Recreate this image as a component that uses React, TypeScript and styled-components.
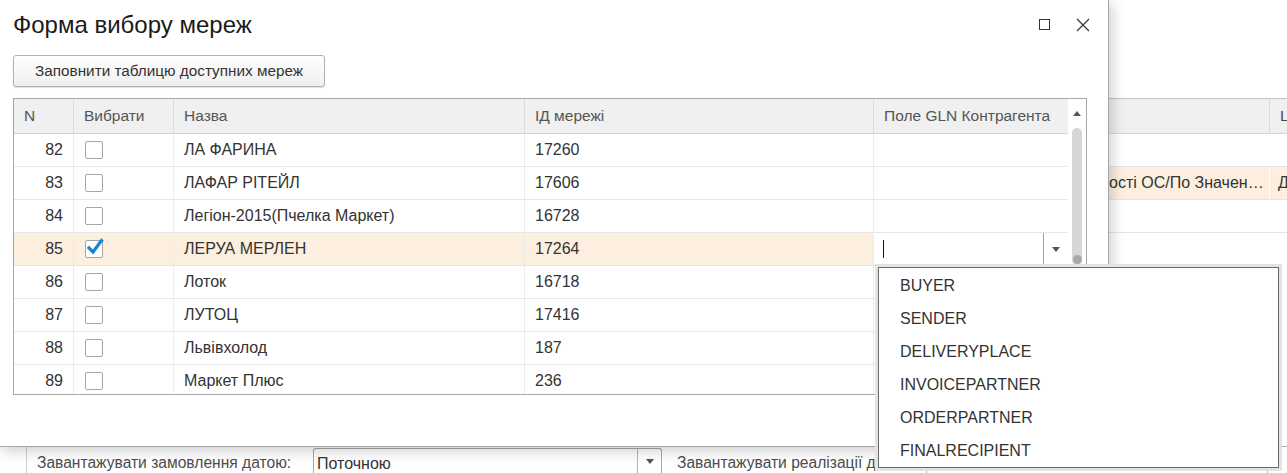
import React from 'react';
import styled, { createGlobalStyle } from 'styled-components';

const Global = createGlobalStyle`
  html, body { margin: 0; padding: 0; }
  body { font-family: "Liberation Sans", Arial, sans-serif; background: #fff; color: #333; }
  * { box-sizing: border-box; }
`;

const Screen = styled.div`
  position: relative;
  width: 1287px;
  height: 473px;
  overflow: hidden;
  background: #fff;
`;

/* ---------- background application ---------- */
const BgPage = styled.div`
  height: 100%;
  display: flex;
  flex-direction: column;
  padding-top: 98px;
`;

const BgHeader = styled.div`
  display: grid;
  grid-template-columns: 1269px 1fr;
  height: 36px;
  background: #f0f0f0;
  border-top: 1px solid #c4c4c4;
  border-bottom: 1px solid #d6d6d6;
`;

const BgHeadCell = styled.div`
  display: flex;
  align-items: center;
  padding-left: 10px;
  font-size: 15.5px;
  color: #4d4d4d;
  white-space: nowrap;
  overflow: hidden;
  & + & { border-left: 1px solid #dcdcdc; }
`;

const BgRow = styled.div<{ $hl?: boolean }>`
  display: grid;
  grid-template-columns: 1100px 169px 1fr;
  height: 33px;
  border-bottom: 1px solid #e4e4e4;
  background: ${(p) => (p.$hl ? '#fdefdf' : '#fff')};
`;

const BgCell = styled.div`
  display: flex;
  align-items: center;
  padding: 0 5px 0 8px;
  font-size: 16px;
  color: #333;
  white-space: nowrap;
  overflow: hidden;
  & + & { border-left: 1px solid #fff; }
`;

const BgText = styled.span`
  overflow: hidden;
  text-overflow: ellipsis;
  white-space: nowrap;
  max-width: 100%;
`;

const BottomBar = styled.div`
  margin-top: auto;
  height: 27px;
  border-top: 1px solid #b4b4b4;
  display: flex;
  padding-left: 26px;
`;

const FieldGroup = styled.div`
  display: flex;
  align-items: flex-start;
  border-left: 1px solid #cfcfcf;
  padding-left: 10px;
`;

const FieldLabel = styled.div<{ $w: number; $pad?: number }>`
  width: ${(p) => p.$w}px;
  padding-top: 7px;
  padding-left: ${(p) => p.$pad ?? 0}px;
  font-size: 15.6px;
  color: #4d4d4d;
  white-space: nowrap;
  overflow: hidden;
`;

const FieldInput = styled.div<{ $w: number }>`
  width: ${(p) => p.$w}px;
  height: 27px;
  margin-top: 1px;
  border: 1px solid #a8a8a8;
  border-bottom: none;
  border-radius: 3px 3px 0 0;
  display: flex;
`;

const FieldValue = styled.div`
  flex: 1;
  padding: 6px 0 0 3px;
  font-size: 16px;
  color: #333;
`;

const FieldBtn = styled.div`
  width: 24px;
  border-left: 1px solid #b4b4b4;
  display: flex;
  justify-content: center;
  padding-top: 10px;
`;

/* ---------- modal window ---------- */
const Modal = styled.div`
  position: absolute;
  left: 0;
  top: 0;
  width: 1109px;
  height: 447px;
  background: #fff;
  border-right: 1px solid #a6a6a6;
  border-bottom: 1px solid #a6a6a6;
  box-shadow: 2px 3px 14px rgba(0, 0, 0, 0.22);
  display: flex;
  flex-direction: column;
`;

const TitleBar = styled.div`
  height: 50px;
  display: flex;
  align-items: center;
  padding: 0 18px 0 13px;
`;

const Title = styled.div`
  flex: 1;
  font-size: 24px;
  color: #1a1a1a;
  padding-bottom: 1px;
`;

const WinBtns = styled.div`
  display: flex;
  align-items: center;
  gap: 25px;
`;

const Toolbar = styled.div`
  padding: 5px 0 11px 13px;
`;

const Button = styled.div`
  width: 312px;
  height: 32px;
  border: 1px solid #b0b0b0;
  border-radius: 3px;
  background: linear-gradient(#ffffff, #efefef);
  box-shadow: 0 1px 1px rgba(0, 0, 0, 0.12);
  display: flex;
  align-items: center;
  justify-content: center;
  font-size: 15.3px;
  color: #333;
`;

const TableFrame = styled.div`
  margin-left: 13px;
  width: 1074px;
  height: 297px;
  border: 1px solid #a8a8a8;
  display: flex;
`;

const DataArea = styled.div`
  flex: 1;
  display: flex;
  flex-direction: column;
  overflow: hidden;
`;

const cols = '60px 100px 351px 349px 1fr';

const HeadRow = styled.div`
  display: grid;
  grid-template-columns: ${cols};
  height: 35px;
  background: #f0f0f0;
  border-bottom: 1px solid #d4d4d4;
`;

const HeadCell = styled.div`
  display: flex;
  align-items: center;
  padding-left: 10px;
  font-size: 15.5px;
  color: #555;
  border-right: 1px solid #dcdcdc;
  white-space: nowrap;
  &:last-child { border-right: none; }
`;

const Body = styled.div`
  height: 260px;
  overflow: hidden;
`;

const Row = styled.div<{ $active?: boolean }>`
  display: grid;
  grid-template-columns: ${cols};
  height: 33px;
  border-bottom: 1px solid #e6e6e6;
  background: ${(p) => (p.$active ? '#fdefdf' : '#fff')};
`;

const Cell = styled.div<{ $right?: boolean }>`
  display: flex;
  align-items: center;
  justify-content: ${(p) => (p.$right ? 'flex-end' : 'flex-start')};
  padding: ${(p) => (p.$right ? '0 10px 0 0' : '0 0 0 10px')};
  font-size: 16px;
  color: #333;
  white-space: nowrap;
  border-right: 1px solid #ececec;
  &:last-child { border-right: none; }
`;

const CheckCell = styled(Cell)`
  padding-left: 11px;
`;

const Checkbox = styled.div`
  width: 18px;
  height: 18px;
  border: 1px solid #a6a6a6;
  border-radius: 2px;
  background: #fff;
  position: relative;
`;

const CheckMark = styled.svg`
  position: absolute;
  left: 0px;
  top: -3px;
`;

const EditCell = styled.div`
  background: #fff;
  display: flex;
  align-items: stretch;
`;

const EditArea = styled.div`
  flex: 1;
  display: flex;
  align-items: center;
  padding-left: 9px;
`;

const Caret = styled.div`
  width: 1px;
  height: 18px;
  background: #111;
`;

const EditBtn = styled.div`
  width: 25px;
  border-left: 1px solid #a0a0a0;
  display: flex;
  align-items: center;
  justify-content: center;
`;

const ScrollBar = styled.div`
  width: 18px;
  display: flex;
  flex-direction: column;
  align-items: center;
  padding-top: 12px;
`;

const Thumb = styled.div`
  margin-top: 12px;
  width: 10px;
  height: 137px;
  border-radius: 5px;
  background: #d6d6d6;
  display: flex;
  flex-direction: column;
  justify-content: flex-end;
  align-items: center;
  padding-bottom: 1px;
`;

const ThumbDot = styled.div`
  width: 9px;
  height: 9px;
  border-radius: 50%;
  background: #a9a9a9;
`;

/* ---------- dropdown list ---------- */
const Dropdown = styled.div`
  position: absolute;
  left: 878px;
  top: 267px;
  width: 401px;
  height: 201px;
  background: #fff;
  border: 1px solid #6a6a6a;
  box-shadow: 0 0 0 3px #e3e3e3;
  padding-top: 1px;
`;

const DropItem = styled.div`
  height: 33px;
  display: flex;
  align-items: center;
  padding-left: 21px;
  font-size: 16px;
  color: #333;
`;

const Tri = ({ up }: { up?: boolean }) => (
  <svg width="8" height="5" viewBox="0 0 8 5">
    <path d={up ? 'M0 5 L4 0 L8 5 Z' : 'M0 0 L8 0 L4 5 Z'} fill="#555" />
  </svg>
);

const rows = [
  { n: 82, name: 'ЛА ФАРИНА', id: '17260' },
  { n: 83, name: 'ЛАФАР РІТЕЙЛ', id: '17606' },
  { n: 84, name: 'Легіон-2015(Пчелка Маркет)', id: '16728' },
  { n: 85, name: 'ЛЕРУА МЕРЛЕН', id: '17264', checked: true, active: true },
  { n: 86, name: 'Лоток', id: '16718' },
  { n: 87, name: 'ЛУТОЦ', id: '17416' },
  { n: 88, name: 'Львівхолод', id: '187' },
  { n: 89, name: 'Маркет Плюс', id: '236' },
];

const items = ['BUYER', 'SENDER', 'DELIVERYPLACE', 'INVOICEPARTNER', 'ORDERPARTNER', 'FINALRECIPIENT'];

export default function App() {
  return (
    <>
      <Global />
      <Screen>
        <BgPage>
          <BgHeader>
            <BgHeadCell />
            <BgHeadCell>L</BgHeadCell>
          </BgHeader>
          <BgRow>
            <BgCell />
            <BgCell />
            <BgCell />
          </BgRow>
          <BgRow $hl>
            <BgCell />
            <BgCell>
              <BgText>ості ОС/По Значенню</BgText>
            </BgCell>
            <BgCell>Д</BgCell>
          </BgRow>
          <BgRow>
            <BgCell />
            <BgCell />
            <BgCell />
          </BgRow>
          <BottomBar>
            <FieldGroup>
              <FieldLabel $w={276}>Завантажувати замовлення датою:</FieldLabel>
              <FieldInput $w={349}>
                <FieldValue>Поточною</FieldValue>
                <FieldBtn>
                  <Tri />
                </FieldBtn>
              </FieldInput>
              <FieldLabel $w={264} $pad={15}>
                Завантажувати реалізації датою:
              </FieldLabel>
              <FieldInput $w={342}>
                <FieldValue />
              </FieldInput>
            </FieldGroup>
          </BottomBar>
        </BgPage>

        <Modal>
          <TitleBar>
            <Title>Форма вибору мереж</Title>
            <WinBtns>
              <svg width="12" height="12" viewBox="0 0 12 12">
                <rect x="0.5" y="0.5" width="10" height="10" fill="none" stroke="#333" strokeWidth="1" />
              </svg>
              <svg width="14" height="14" viewBox="0 0 14 14">
                <path d="M1 1 L13 13 M13 1 L1 13" stroke="#333" strokeWidth="1.2" />
              </svg>
            </WinBtns>
          </TitleBar>
          <Toolbar>
            <Button>Заповнити таблицю доступних мереж</Button>
          </Toolbar>
          <TableFrame>
            <DataArea>
              <HeadRow>
                <HeadCell>N</HeadCell>
                <HeadCell>Вибрати</HeadCell>
                <HeadCell>Назва</HeadCell>
                <HeadCell>ІД мережі</HeadCell>
                <HeadCell>Поле GLN Контрагента</HeadCell>
              </HeadRow>
              <Body>
                {rows.map((r) => (
                  <Row key={r.n} $active={r.active}>
                    <Cell $right>{r.n}</Cell>
                    <CheckCell>
                      <Checkbox>
                        {r.checked && (
                          <CheckMark width="18" height="18" viewBox="0 0 18 18">
                            <path d="M3 10 L7 14 L15.5 2.5" fill="none" stroke="#1685d3" strokeWidth="3.2" strokeLinecap="square" />
                          </CheckMark>
                        )}
                      </Checkbox>
                    </CheckCell>
                    <Cell>{r.name}</Cell>
                    <Cell>{r.id}</Cell>
                    {r.active ? (
                      <EditCell>
                        <EditArea>
                          <Caret />
                        </EditArea>
                        <EditBtn>
                          <Tri />
                        </EditBtn>
                      </EditCell>
                    ) : (
                      <Cell />
                    )}
                  </Row>
                ))}
              </Body>
            </DataArea>
            <ScrollBar>
              <Tri up />
              <Thumb>
                <ThumbDot />
              </Thumb>
            </ScrollBar>
          </TableFrame>
        </Modal>

        <Dropdown>
          {items.map((it) => (
            <DropItem key={it}>{it}</DropItem>
          ))}
        </Dropdown>
      </Screen>
    </>
  );
}
